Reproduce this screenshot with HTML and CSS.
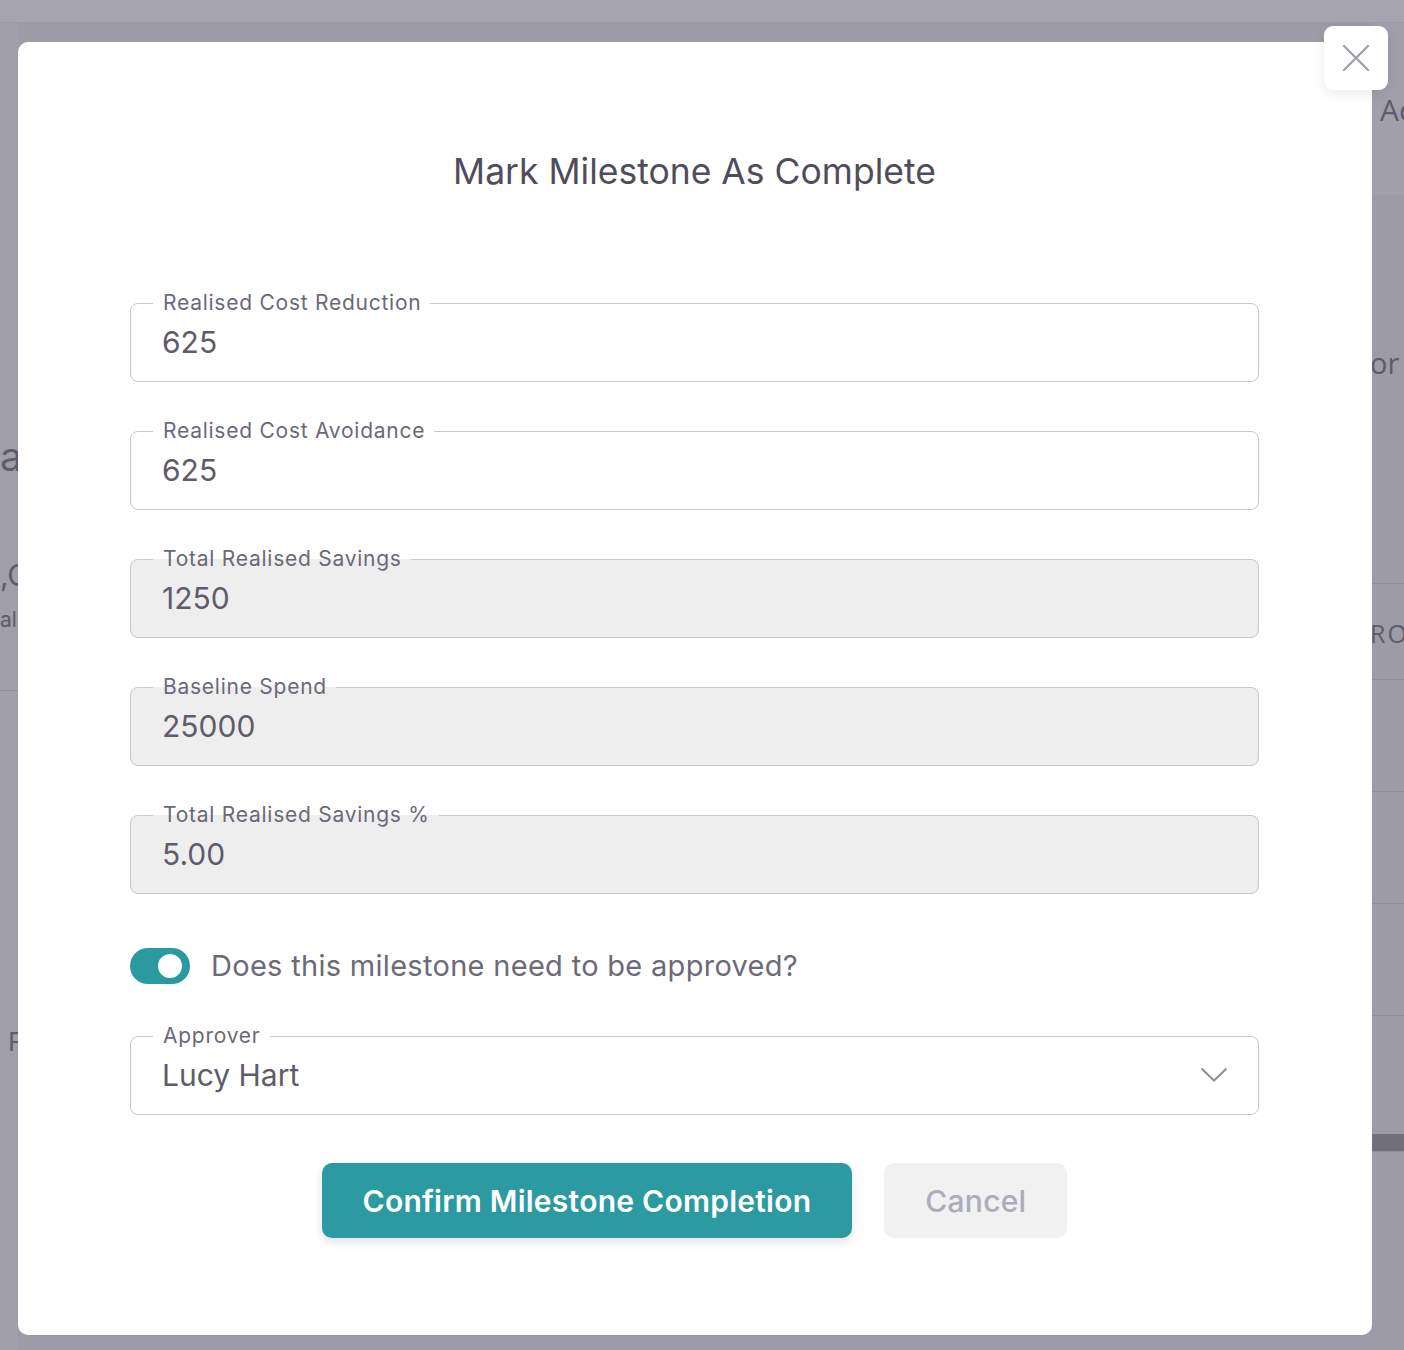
FILE: index.html
```html
<!DOCTYPE html>
<html lang="en">
<head>
    <meta charset="UTF-8">
    <meta name="viewport" content="width=device-width, initial-scale=1.0">
    <title>Mark Milestone As Complete</title>
    <link rel="stylesheet" href="styles.css">
</head>
<body>
    <!-- page behind the dialog, dimmed by the backdrop -->
    <div class="page">
        <div class="topbar"></div>
        <div class="page-body">
            <aside class="left-col">
                <div class="left-heading">a</div>
                <div class="left-figure">,C</div>
                <div class="left-note">ali</div>
                <div class="left-rule"></div>
                <div class="left-foot">F</div>
            </aside>
            <section class="right-col">
                <div class="right-card">Ac</div>
                <div class="right-label">or</div>
                <div class="right-row right-head">RO</div>
                <div class="right-row"></div>
                <div class="right-row"></div>
                <div class="right-row"></div>
                <div class="right-row right-last"></div>
                <div class="right-bar"></div>
            </section>
        </div>
    </div>

    <div class="modal">
        <h2 class="modal-title">Mark Milestone As Complete</h2>
        <form class="milestone-form" onsubmit="return false">
            <fieldset class="field">
                <legend>Realised Cost Reduction</legend>
                <input type="text" value="625">
            </fieldset>
            <fieldset class="field">
                <legend>Realised Cost Avoidance</legend>
                <input type="text" value="625">
            </fieldset>
            <fieldset class="field field-readonly">
                <legend>Total Realised Savings</legend>
                <input type="text" value="1250" readonly>
            </fieldset>
            <fieldset class="field field-readonly">
                <legend>Baseline Spend</legend>
                <input type="text" value="25000" readonly>
            </fieldset>
            <fieldset class="field field-readonly">
                <legend>Total Realised Savings %</legend>
                <input type="text" value="5.00" readonly>
            </fieldset>

            <label class="toggle-row">
                <span class="toggle"><span class="toggle-knob"></span></span>
                <span class="toggle-text">Does this milestone need to be approved?</span>
            </label>

            <fieldset class="field field-select">
                <legend>Approver</legend>
                <div class="select-value">
                    <span>Lucy Hart</span>
                    <svg class="chevron" width="28" height="16" viewBox="0 0 28 16">
                        <polyline points="1.5,1.5 14,13.5 26.5,1.5" fill="none" stroke="#8e8d99" stroke-width="2"/>
                    </svg>
                </div>
            </fieldset>

            <div class="actions">
                <button type="submit" class="btn btn-primary">Confirm Milestone Completion</button>
                <button type="button" class="btn btn-cancel">Cancel</button>
            </div>
        </form>
    </div>

    <button class="close-btn" type="button" aria-label="Close">
        <svg width="28" height="28" viewBox="0 0 28 28">
            <path d="M2 2 L26 26 M26 2 L2 26" stroke="#a09fab" stroke-width="2.4" stroke-linecap="round"/>
        </svg>
    </button>
</body>
</html>
```

FILE: styles.css
```css
body {
    margin: 0;
    width: 1404px;
    height: 1350px;
    overflow: hidden;
    position: relative;
    background-color: #9c9ba7;
    font-family: Inter, "Noto Sans", sans-serif;
}

/* dimmed page */
.page {
    height: 100%;
    display: flex;
    flex-direction: column;
}
.topbar {
    height: 22px;
    background-color: #a5a4af;
    border-bottom: 1px solid #9a99a5;
}
.page-body {
    flex: 1;
    display: flex;
    justify-content: space-between;
}
.left-col {
    width: 18px;
    color: #5d5c6a;
    white-space: nowrap;
    background-color: #9f9eaa;
}
.left-heading {
    margin-top: 410px;
    font-size: 40px;
    line-height: 48px;
}
.left-figure {
    margin-top: 76px;
    font-size: 30px;
    line-height: 36px;
}
.left-note {
    margin-top: 14px;
    font-size: 21px;
    line-height: 26px;
}
.left-rule {
    margin-top: 57px;
    border-top: 1px solid #8e8d99;
}
.left-foot {
    margin: 335px 0 0 8px;
    font-size: 26px;
}
.right-col {
    width: 32px;
    color: #5d5c6a;
    white-space: nowrap;
    font-family: "Open Sans", sans-serif;
}
.right-card {
    height: 172px;
    padding-left: 8px;
    padding-top: 67px;
    box-sizing: border-box;
    font-size: 30px;
    line-height: 40px;
    background-color: #a09fab;
}
.right-label {
    height: 388px;
    padding-top: 150px;
    box-sizing: border-box;
    margin-left: -2px;
    font-size: 29px;
    line-height: 36px;
}
.right-row {
    height: 111px;
    border-top: 1px solid #8f8e9a;
}
.right-head {
    height: 96px;
    padding-top: 32px;
    box-sizing: border-box;
    margin-left: -2px;
    font-size: 25px;
    line-height: 34px;
    letter-spacing: 2px;
}
.right-last {
    height: 118px;
}
.right-bar {
    height: 17px;
    background-color: #716f7c;
    border-bottom: 1px solid #8f8e9a;
}

/* dialog */
.modal {
    position: absolute;
    top: 42px;
    left: 18px;
    width: 1354px;
    height: 1293px;
    box-sizing: border-box;
    padding: 108px 113px 0 112px;
    background: #fff;
    border-radius: 10px;
}
.modal-title {
    margin: 0;
    text-align: center;
    font-size: 35.5px;
    line-height: 44px;
    font-weight: 400;
    color: #4f4d5c;
}
.milestone-form {
    margin-top: 97px;
    display: flex;
    flex-direction: column;
    gap: 37px;
}
.field {
    margin: 0;
    padding: 9px 31px 21px;
    border: 1px solid #c9c8cf;
    border-radius: 8px;
    min-width: 0;
}
.field legend {
    margin-left: -9px;
    padding: 0 9px 0 10px;
    font-size: 21px;
    line-height: 24px;
    color: #6b6978;
    letter-spacing: 0.75px;
}
.field input {
    display: block;
    width: 100%;
    height: 36px;
    padding: 0;
    border: none;
    outline: none;
    background: transparent;
    font-family: inherit;
    font-size: 30px;
    line-height: 36px;
    color: #5e5c6b;
}
.field-readonly {
    background-color: #eeeeee;
}

.toggle-row {
    display: flex;
    align-items: center;
    gap: 21px;
    margin-top: 17px;
    margin-bottom: 3px;
}
.toggle {
    width: 60px;
    height: 36px;
    border-radius: 18px;
    background-color: #2b9aa0;
    display: flex;
    align-items: center;
    justify-content: flex-end;
    padding-right: 8px;
    box-sizing: border-box;
}
.toggle-knob {
    width: 24px;
    height: 24px;
    border-radius: 50%;
    background: #fff;
}
.toggle-text {
    font-size: 29px;
    line-height: 36px;
    letter-spacing: 0.3px;
    color: #6c6a79;
}

.select-value {
    display: flex;
    align-items: center;
    justify-content: space-between;
    height: 36px;
    font-size: 30px;
    line-height: 36px;
    color: #5e5c6b;
}
.chevron {
    margin-right: -1px;
}

.actions {
    display: flex;
    justify-content: center;
    gap: 32px;
    margin-top: 11px;
}
.btn {
    height: 75px;
    padding: 0 41px;
    border: none;
    border-radius: 10px;
    font-family: inherit;
    font-size: 30px;
    letter-spacing: 0.25px;
    cursor: pointer;
}
.btn-primary {
    background-color: #2b9aa1;
    color: #fff;
    font-weight: 600;
    box-shadow: 0 4px 10px rgba(0, 0, 0, 0.12);
}
.btn-cancel {
    background-color: #f1f1f2;
    color: #adacb8;
    font-weight: 500;
}

.close-btn {
    position: absolute;
    top: 26px;
    left: 1324px;
    width: 64px;
    height: 64px;
    padding: 0;
    border: none;
    border-radius: 9px;
    background: #fff;
    box-shadow: 0 4px 12px rgba(0, 0, 0, 0.08);
    display: flex;
    align-items: center;
    justify-content: center;
    cursor: pointer;
}
```
